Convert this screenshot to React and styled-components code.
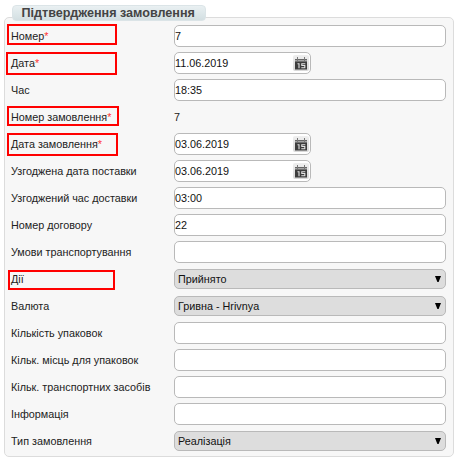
import React from 'react';
import styled, { createGlobalStyle } from 'styled-components';

const GlobalStyle = createGlobalStyle`
  *, *::before, *::after { box-sizing: border-box; }
  body {
    margin: 0;
    background: #fff;
    color: #222;
    font: 10.8px/13px "Liberation Sans", Arial, sans-serif;
  }
`;

const Page = styled.main`
  height: 458px;
  padding: 17px 4px 0;
  overflow: hidden;
`;

const Panel = styled.section`
  position: relative;
  width: 450px;
  height: 440px;
  padding: 4px 7px 0 6px;
  background: #f7f7f7;
  border: 1px solid #dcdcdc;
  border-radius: 5px;
`;

const Legend = styled.h1`
  position: absolute;
  left: 7px;
  top: -13px;
  width: 194px;
  height: 16px;
  margin: 0;
  padding-left: 8.5px;
  border: 1px solid #dbe4e7;
  border-radius: 4px;
  background: linear-gradient(#e9f0f2, #d3dfe2);
  color: #444;
  font-size: 12.6px;
  font-weight: bold;
  line-height: 15px;
  white-space: nowrap;
`;

const Row = styled.div`
  position: relative;
  display: grid;
  grid-template-columns: 163px 272px;
  align-items: center;
  height: 27px;
`;

const Label = styled.label`
  padding-top: 1px;
  white-space: nowrap;
`;

const Required = styled.span`
  color: #f33;
`;

const Highlight = styled.span`
  position: absolute;
  left: ${({ $x }) => $x}px;
  top: ${({ $y }) => $y}px;
  width: ${({ $w }) => $w}px;
  height: ${({ $h }) => $h}px;
  border: 2px solid #f00;
  pointer-events: none;
`;

const TextInput = styled.input`
  width: 272px;
  height: 22px;
  margin: 0;
  padding: 0;
  border: 1px solid #b9b9b9;
  border-radius: 5px;
  outline: none;
  background: #fff;
  color: #111;
  font: inherit;
`;

const DateField = styled.div`
  display: flex;
  align-items: center;
  width: 137px;
  height: 22px;
  border: 1px solid #b9b9b9;
  border-radius: 5px;
  background: #fff;
  color: #111;
`;

const DateValue = styled.span`
  flex: 1;
  padding-top: 1px;
`;

const CalendarButton = styled.button`
  display: flex;
  width: 16px;
  height: 16px;
  margin: 0 1px 0 0;
  padding: 0;
  border: 0;
  border-radius: 2px;
  background: linear-gradient(#efefef, #d8d8d8);
`;

const Select = styled.div`
  display: flex;
  align-items: center;
  justify-content: space-between;
  height: 20px;
  margin-top: 1px;
  padding: 0 4px 0 3px;
  border: 1px solid #b9b9b9;
  border-radius: 5px;
  background: #ddd;
  color: #111;
`;

const PlainValue = styled.span`
  padding-top: 1px;
`;

const CalendarIcon = () => (
  <svg width="16" height="16" viewBox="0 0 16 16" fill="none">
    <path d="M2 4h12v3H2z" fill="#a5a5a5" />
    <path d="M2 4.5h12" stroke="#666" />
    <path d="M4.5 2v4M11.5 2v4" stroke="#777" />
    <path d="M2 6.5h12v8H2z" fill="#3d3d3d" />
    <path d="M4.5 8.7H6V13.2M12.3 8.7H8.8v1.8H11.8v2.2H8.3" stroke="#e4e4e4" strokeWidth="1.1" />
  </svg>
);

const Arrow = () => (
  <svg width="6" height="7" viewBox="0 0 6 7">
    <path d="M0 0h6L3.6 6h-1.2z" fill="#000" />
  </svg>
);

const fields = [
  { label: 'Номер', value: '7', required: true, mark: [-4, 2, 110, 21] },
  { label: 'Дата', value: '11.06.2019', type: 'date', required: true, mark: [-5, 3, 111, 23] },
  { label: 'Час', value: '18:35' },
  { label: 'Номер замовлення', value: '7', type: 'plain', required: true, mark: [-4, 3, 112, 20] },
  { label: 'Дата замовлення', value: '03.06.2019', type: 'date', required: true, mark: [-4, 3, 111, 23] },
  { label: 'Узгоджена дата поставки', value: '03.06.2019', type: 'date' },
  { label: 'Узгоджений час доставки', value: '03:00' },
  { label: 'Номер договору', value: '22' },
  { label: 'Умови транспортування', value: '' },
  { label: 'Дії', value: 'Прийнято', type: 'select', mark: [-3, 5, 107, 20] },
  { label: 'Валюта', value: 'Гривна - Hrivnya', type: 'select' },
  { label: 'Кількість упаковок', value: '' },
  { label: 'Кільк. місць для упаковок', value: '' },
  { label: 'Кільк. транспортних засобів', value: '' },
  { label: 'Інформація', value: '' },
  { label: 'Тип замовлення', value: 'Реалізація', type: 'select' },
];

function Control({ type, value, label }) {
  if (type === 'date') {
    return (
      <DateField>
        <DateValue>{value}</DateValue>
        <CalendarButton type="button"><CalendarIcon /></CalendarButton>
      </DateField>
    );
  }
  if (type === 'select') return <Select>{value}<Arrow /></Select>;
  if (type === 'plain') return <PlainValue>{value}</PlainValue>;
  return <TextInput aria-label={label} defaultValue={value} />;
}

export default function App() {
  return (
    <Page>
      <GlobalStyle />
      <Panel>
        <Legend>Підтвердження замовлення</Legend>
        {fields.map(({ label, value, type, required, mark }) => (
          <Row key={label}>
            <Label>{label}{required && <Required>*</Required>}</Label>
            <Control type={type} value={value} label={label} />
            {mark && <Highlight $x={mark[0]} $y={mark[1]} $w={mark[2]} $h={mark[3]} />}
          </Row>
        ))}
      </Panel>
    </Page>
  );
}
